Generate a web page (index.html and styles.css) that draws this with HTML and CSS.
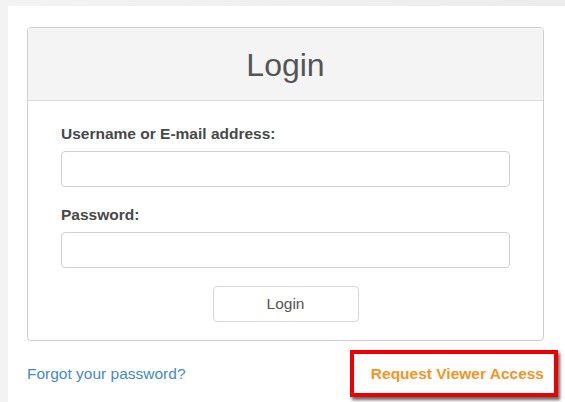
FILE: index.html
```html
<!DOCTYPE html>
<html lang="en">
<head>
<meta charset="utf-8">
<title>Login</title>
<link rel="stylesheet" href="styles.css">
</head>
<body>
<main class="page">
  <section class="panel">
    <header class="panel-head">
      <h1 class="panel-title">Login</h1>
    </header>
    <form class="panel-body">
      <label class="field-label" for="user">Username or E-mail address:</label>
      <input class="field-input" id="user" type="text">
      <label class="field-label" for="pass">Password:</label>
      <input class="field-input" id="pass" type="password">
      <div class="actions">
        <button class="btn" type="button">Login</button>
      </div>
    </form>
  </section>
  <div class="links">
    <a class="link-forgot" href="#">Forgot your password?</a>
    <a class="link-request" href="#">Request Viewer Access</a>
  </div>
</main>
</body>
</html>
```

FILE: styles.css
```css
* {
  box-sizing: border-box;
}

html, body {
  margin: 0;
  height: 100%;
}

body {
  background: linear-gradient(90deg, #f3f3f3, #ececec);
  font-family: "Liberation Sans", Arial, sans-serif;
  font-size: 15.5px;
  color: #444;
  overflow: hidden;
}

.page {
  margin: 6px 0 0 8px;
  min-height: 100%;
  background: #fff;
  padding: 21px 21px 0 19px;
}

.panel {
  border: 1px solid #cfcfcf;
  border-radius: 4px;
  background: #fff;
  overflow: hidden;
}

.panel-head {
  background: #f4f4f4;
  border-bottom: 1px solid #dcdcdc;
  height: 73px;
  display: flex;
  align-items: center;
  justify-content: center;
}

.panel-title {
  margin: 1px 0 0;
  font-weight: normal;
  font-size: 32px;
  line-height: 40px;
  color: #555;
}

.panel-body {
  display: flex;
  flex-direction: column;
  padding: 23px 33px 18px;
}

.field-label {
  font-weight: bold;
  font-size: 15.5px;
  line-height: 20px;
  color: #484848;
  margin-bottom: 7px;
}

.field-input {
  height: 36px;
  border: 1px solid #d0d0d0;
  border-radius: 4px;
  background: #fff;
  margin-bottom: 18px;
  font: inherit;
  padding: 6px 10px;
}

.actions {
  display: flex;
  justify-content: center;
}

.btn {
  width: 146px;
  height: 36px;
  border: 1px solid #d6d6d6;
  border-radius: 4px;
  background: #fff;
  font-family: "Liberation Sans", Arial, sans-serif;
  font-size: 15.5px;
  color: #555;
}

.links {
  display: flex;
  justify-content: space-between;
  align-items: center;
  margin-top: 9px;
  margin-right: -14px;
}

.link-forgot {
  color: #428bca;
  text-decoration: none;
  line-height: 20px;
}

.link-request {
  color: #f7941e;
  font-weight: bold;
  text-decoration: none;
  line-height: 20px;
  padding: 10px 10px 9px 17px;
  border: 4px solid #ee0000;
  box-shadow: 2px 3px 3px rgba(0, 0, 0, 0.6);
}
```
